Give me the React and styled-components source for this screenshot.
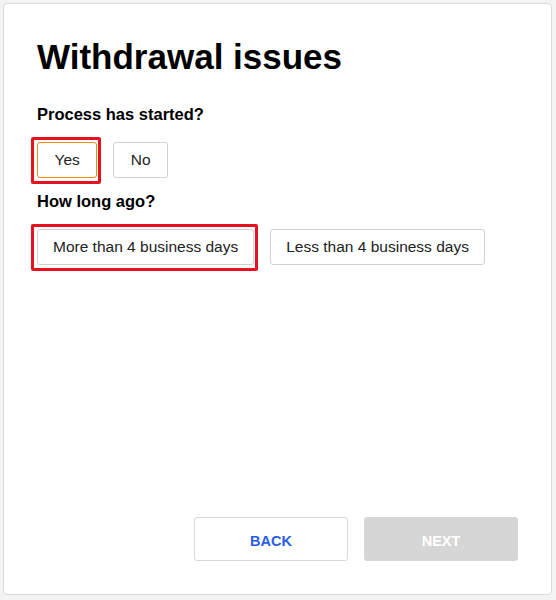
import React, { useState } from 'react'
import styled, { createGlobalStyle } from 'styled-components'

const GlobalStyle = createGlobalStyle`
  html, body {
    margin: 0;
    padding: 0;
    background: #f3f3f3;
  }
  body {
    font-family: "Liberation Sans", Arial, sans-serif;
  }
`

const Page = styled.div`
  padding: 3px;
  width: 556px;
  height: 600px;
  box-sizing: border-box;
`

const Card = styled.div`
  height: 592px;
  width: 549px;
  box-sizing: border-box;
  background: #fff;
  border: 1px solid #dadada;
  border-radius: 4px;
  padding: 33px 33px 33px 33px;
  display: flex;
  flex-direction: column;
`

const Title = styled.h1`
  margin: 0;
  font-size: 35px;
  line-height: 40px;
  font-weight: 700;
  color: #000;
`

const Question = styled.h2`
  margin: ${props => props.top}px 0 18px 0;
  font-size: 16.5px;
  line-height: 20px;
  font-weight: 700;
  color: #000;
`

const Options = styled.div`
  display: flex;
  gap: 16px;
`

const Option = styled.button`
  position: relative;
  height: 36px;
  padding: 0 ${props => props.pad || 15}px;
  box-sizing: border-box;
  background: #fff;
  border: 1px solid ${props => (props.focused ? '#f08a10' : '#d2d2d2')};
  border-radius: 3px;
  font-family: "Liberation Sans", Arial, sans-serif;
  font-size: 15.5px;
  color: #222;
  cursor: pointer;
  outline: none;

  &::after {
    content: '';
    display: ${props => (props.selected ? 'block' : 'none')};
    position: absolute;
    top: -6px;
    left: -7px;
    right: -5px;
    bottom: -7px;
    border: 3px solid #e8121e;
    border-radius: 2px;
    pointer-events: none;
  }
`

const Footer = styled.div`
  margin-top: auto;
  display: flex;
  justify-content: flex-end;
  gap: 16px;
`

const NavButton = styled.button`
  width: 154px;
  height: 44px;
  box-sizing: border-box;
  border-radius: 3px;
  border: 1px solid ${props => (props.disabled ? '#d6d6d6' : '#d8d8d8')};
  background: ${props => (props.disabled ? '#d6d6d6' : '#fff')};
  color: ${props => (props.disabled ? '#fff' : '#2a5de8')};
  font-family: "Liberation Sans", Arial, sans-serif;
  font-size: 14.5px;
  font-weight: 700;
  padding-top: 4px;
`

const App = () => {
  const [started, setStarted] = useState('yes')
  const [ago, setAgo] = useState('more')

  return (
    <Page>
      <GlobalStyle />
      <Card>
        <Title>Withdrawal issues</Title>
        <Question top={27}>Process has started?</Question>
        <Options>
          <Option pad={16.5} selected={started === 'yes'} focused={started === 'yes'} onClick={() => setStarted('yes')}>
            Yes
          </Option>
          <Option pad={16.5} selected={started === 'no'} onClick={() => setStarted('no')}>
            No
          </Option>
        </Options>
        <Question top={13}>How long ago?</Question>
        <Options>
          <Option selected={ago === 'more'} onClick={() => setAgo('more')}>
            More than 4 business days
          </Option>
          <Option selected={ago === 'less'} onClick={() => setAgo('less')}>
            Less than 4 business days
          </Option>
        </Options>
        <Footer>
          <NavButton>BACK</NavButton>
          <NavButton disabled>NEXT</NavButton>
        </Footer>
      </Card>
    </Page>
  )
}

export default App
